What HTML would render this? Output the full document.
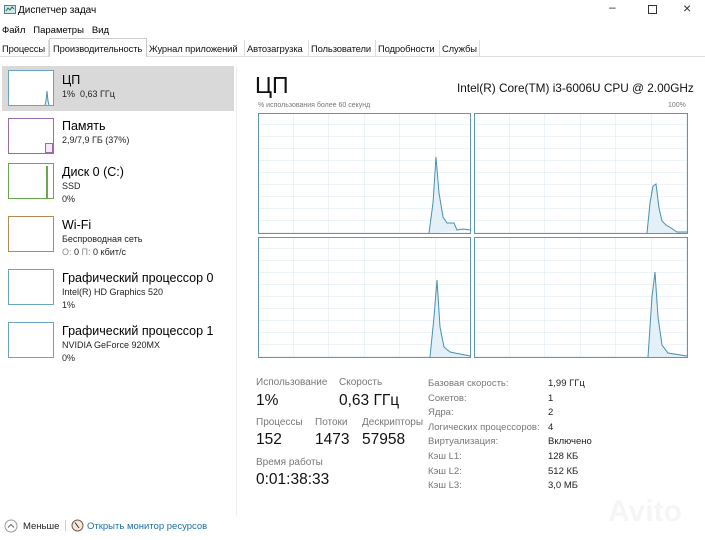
<!DOCTYPE html>
<html><head><meta charset="utf-8"><style>
*{margin:0;padding:0;box-sizing:border-box}
body{width:705px;height:540px;background:#fff;font-family:"Liberation Sans","DejaVu Sans",sans-serif;color:#000;position:relative;overflow:hidden}
.a{position:absolute;white-space:nowrap}
.tab{position:absolute;top:40px;height:17px;font-size:9.4px;padding-top:3px;padding-left:2px;border-right:1px solid #ddd;color:#111;letter-spacing:-0.1px}
.thumb{position:absolute;left:8px;width:46px;height:36px;border:1px solid #6aa4c0;background:#fff}
.t1{font-size:12.5px}
.t2{font-size:9px;color:#222}
.lbl{font-size:10px;color:#777}
.val{font-size:15.5px;color:#111}
.kl{font-size:9.5px;color:#777}
.kv{font-size:9.5px;color:#222}
</style></head><body>
<svg class="a" style="left:4px;top:4px" width="12" height="12"><rect x="0.5" y="1.5" width="11" height="8" fill="#cfe6f5" stroke="#4a7fa0"/><polyline points="2,7 4,4 6,6 8,3 10,5" fill="none" stroke="#2f6d2f"/></svg>
<div class="a" style="left:18px;top:5px;font-size:10px">Диспетчер задач</div>
<div class="a" style="left:609px;top:0px;font-size:12px;color:#333">–</div>
<div class="a" style="left:648px;top:5px;width:9px;height:9px;border:1px solid #333"></div>
<div class="a" style="left:683px;top:0px;font-size:14px;color:#333">×</div>
<div class="a" style="left:2px;top:25px;font-size:9.5px">Файл&nbsp;&nbsp;&nbsp;Параметры&nbsp;&nbsp;&nbsp;Вид</div>
<div class="a" style="left:0;top:56px;width:705px;height:1px;background:#ddd"></div>
<div class="tab" style="left:0px;width:49px">Процессы</div>
<div class="tab" style="left:49px;top:38px;height:19px;width:98px;border:1px solid #ccc;border-bottom:none;background:#fff;padding-left:3px;padding-top:4px">Производительность</div>
<div class="tab" style="left:147px;width:98px">Журнал приложений</div>
<div class="tab" style="left:245px;width:64px">Автозагрузка</div>
<div class="tab" style="left:309px;width:67px">Пользователи</div>
<div class="tab" style="left:376px;width:64px">Подробности</div>
<div class="tab" style="left:440px;width:40px">Службы</div>
<div class="a" style="left:2px;top:66px;width:232px;height:45px;background:#d9d9d9"></div>
<div class="a" style="left:236px;top:66px;width:1px;height:450px;background:#eee"></div>
<div class="thumb" style="top:70px"><svg width="44" height="34"><polyline points="36,34 37,30 38,20 39,30 40,34" fill="#e3f0f7" stroke="#4a8fb0"/></svg></div>
<div class="a t1" style="left:62px;top:73px">ЦП</div>
<div class="a t2" style="left:62px;top:89px">1%&nbsp; 0,63 ГГц</div>
<div class="thumb" style="top:118px;border-color:#9b6ba8"><div style="position:absolute;right:0;bottom:0;width:8px;height:10px;border:1px solid #9b6ba8;background:#f3eaf6"></div></div>
<div class="a t1" style="left:62px;top:119px">Память</div>
<div class="a t2" style="left:62px;top:135px">2,9/7,9 ГБ (37%)</div>
<div class="thumb" style="top:163px;border-color:#6aa84f"><div style="position:absolute;left:37px;top:2px;width:2px;height:32px;background:#6aa84f"></div></div>
<div class="a t1" style="left:62px;top:165px">Диск 0 (C:)</div>
<div class="a t2" style="left:62px;top:181px">SSD</div>
<div class="a t2" style="left:62px;top:194px">0%</div>
<div class="thumb" style="top:216px;border-color:#b08a50"></div>
<div class="a t1" style="left:62px;top:218px">Wi-Fi</div>
<div class="a t2" style="left:62px;top:234px">Беспроводная сеть</div>
<div class="a t2" style="left:62px;top:247px"><span style="color:#888">О:</span> 0 <span style="color:#888">П:</span> 0 кбит/с</div>
<div class="thumb" style="top:269px"></div>
<div class="a t1" style="left:62px;top:271px">Графический процессор 0</div>
<div class="a t2" style="left:62px;top:287px">Intel(R) HD Graphics 520</div>
<div class="a t2" style="left:62px;top:300px">1%</div>
<div class="thumb" style="top:322px"></div>
<div class="a t1" style="left:62px;top:324px">Графический процессор 1</div>
<div class="a t2" style="left:62px;top:340px">NVIDIA GeForce 920MX</div>
<div class="a t2" style="left:62px;top:353px">0%</div>
<div class="a" style="left:255px;top:72px;font-size:23px;color:#111">ЦП</div>
<div class="a" style="left:457px;top:81px;font-size:11.8px;color:#111">Intel(R) Core(TM) i3-6006U CPU @ 2.00GHz</div>
<div class="a" style="left:258px;top:102px;font-size:7px;color:#777">% использования более 60 секунд</div>
<div class="a" style="left:668px;top:102px;font-size:7px;color:#777">100%</div>
<svg class="a" style="left:0;top:0" width="705" height="540">
<defs><pattern id="g" x="0" y="0" width="35.5" height="12" patternUnits="userSpaceOnUse"><path d="M35.5 0V12M0 12H35.5" stroke="#dbe9f2" stroke-width="1" fill="none"/></pattern></defs>
<g transform="translate(258,113)"><rect x="0.5" y="0.5" width="212" height="120" fill="url(#g)" stroke="#5e97b4"/>
<polyline points="171,120 175,90 178,44 181,80 185,104 189,110 196,110 199,117 205,116 212,117" fill="#e3f0f7" stroke="#4a8fb0"/></g>
<g transform="translate(474,113)"><rect x="0.5" y="0.5" width="213" height="120" fill="url(#g)" stroke="#5e97b4"/>
<polyline points="173,120 176,90 179,73 182,71 185,95 188,108 192,112 197,115 203,119 213,119" fill="#e3f0f7" stroke="#4a8fb0"/></g>
<g transform="translate(258,237)"><rect x="0.5" y="0.5" width="212" height="120" fill="url(#g)" stroke="#5e97b4"/>
<polyline points="172,120 176,80 179,43 182,90 186,110 192,115 212,119" fill="#e3f0f7" stroke="#4a8fb0"/></g>
<g transform="translate(474,237)"><rect x="0.5" y="0.5" width="213" height="120" fill="url(#g)" stroke="#5e97b4"/>
<polyline points="174,120 178,60 181,35 184,80 188,108 194,116 213,119" fill="#e3f0f7" stroke="#4a8fb0"/></g>
</svg>
<div class="a lbl" style="left:256px;top:377px">Использование</div>
<div class="a lbl" style="left:339px;top:377px">Скорость</div>
<div class="a val" style="left:256px;top:392px">1%</div>
<div class="a val" style="left:339px;top:392px">0,63 ГГц</div>
<div class="a lbl" style="left:256px;top:417px">Процессы</div>
<div class="a lbl" style="left:315px;top:417px">Потоки</div>
<div class="a lbl" style="left:362px;top:417px">Дескрипторы</div>
<div class="a val" style="left:256px;top:431px">152</div>
<div class="a val" style="left:315px;top:431px">1473</div>
<div class="a val" style="left:362px;top:431px">57958</div>
<div class="a lbl" style="left:256px;top:457px">Время работы</div>
<div class="a val" style="left:256px;top:471px">0:01:38:33</div>
<div class="a kl" style="left:428px;top:377px;line-height:14.6px">Базовая скорость:<br>Сокетов:<br>Ядра:<br>Логических процессоров:<br>Виртуализация:<br>Кэш L1:<br>Кэш L2:<br>Кэш L3:</div>
<div class="a kv" style="left:548px;top:377px;line-height:14.6px">1,99 ГГц<br>1<br>2<br>4<br>Включено<br>128 КБ<br>512 КБ<br>3,0 МБ</div>
<div class="a" style="left:608px;top:495px;font-size:30px;font-weight:bold;color:#f5f5f5">Avito</div>
<svg class="a" style="left:4px;top:519px" width="14" height="14"><circle cx="7" cy="7" r="6" fill="none" stroke="#999"/><polyline points="4,8.5 7,5.5 10,8.5" fill="none" stroke="#666"/></svg>
<div class="a" style="left:23px;top:521px;font-size:9.5px;color:#222">Меньше</div>
<div class="a" style="left:65px;top:520px;width:1px;height:11px;background:#ccc"></div>
<svg class="a" style="left:71px;top:519px" width="13" height="13"><circle cx="6.5" cy="6.5" r="5.5" fill="#f3e8dc" stroke="#7a5a4a"/><line x1="4" y1="3.5" x2="8" y2="9" stroke="#333"/></svg>
<div class="a" style="left:87px;top:521px;font-size:9.5px;color:#1a6fa8">Открыть монитор ресурсов</div>
</body></html>
